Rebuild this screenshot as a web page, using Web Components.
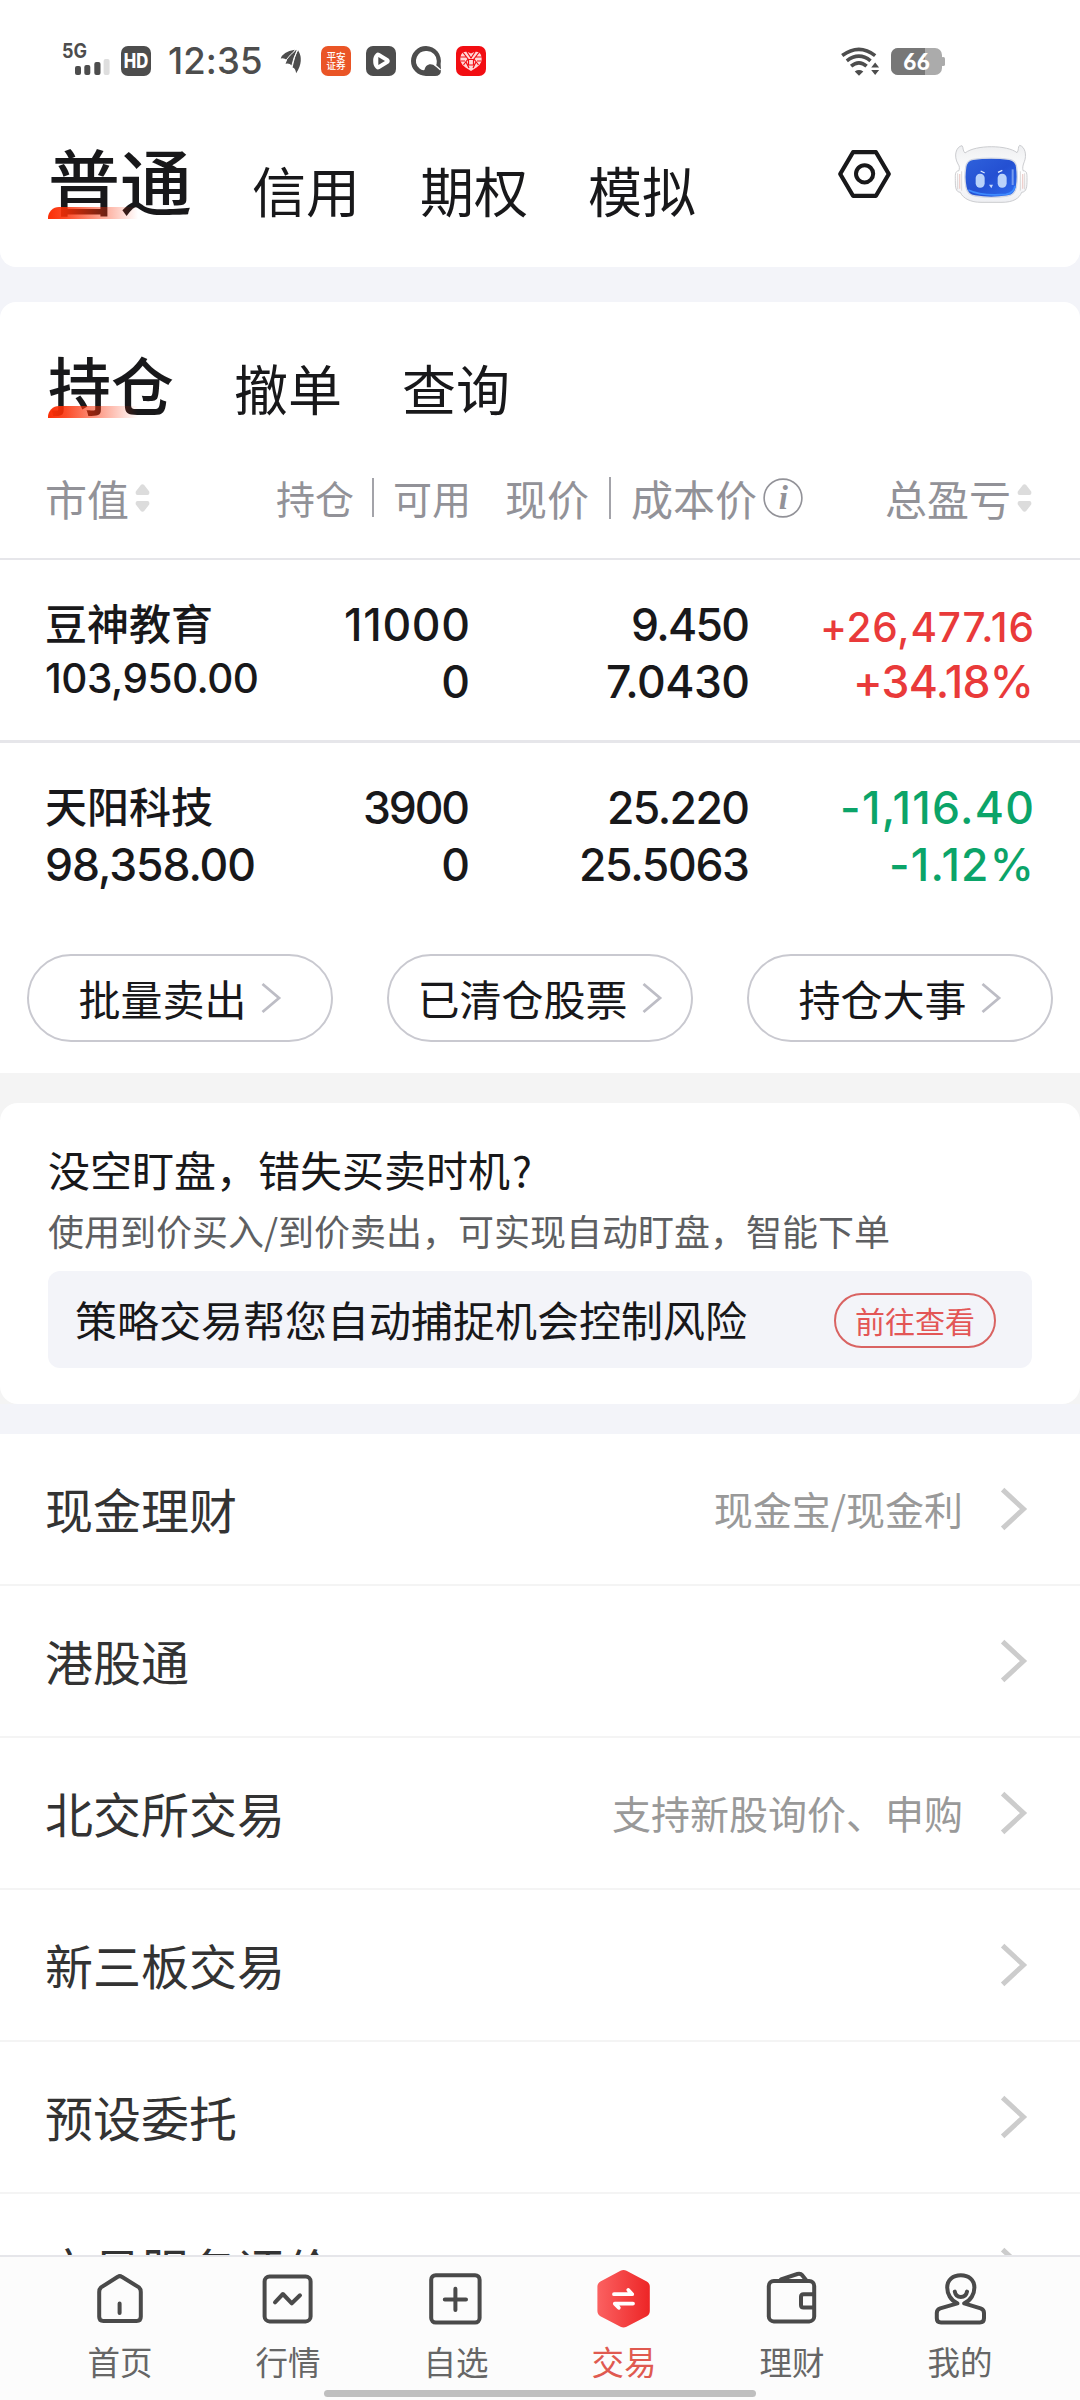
<!DOCTYPE html>
<html lang="zh-CN">
<head>
<meta charset="utf-8">
<title>交易</title>
<style>
html,body{margin:0;padding:0;background:#fff}
body{width:1080px;height:2400px;overflow:hidden;font-family:"Noto Sans CJK SC",sans-serif;color:#18181a}
</style>
</head>
<body>
<trade-app></trade-app>
<script>
const define = (name, html, setup) => {
  const tpl = document.createElement('template');
  tpl.innerHTML = html;
  customElements.define(name, class extends HTMLElement {
    constructor() {
      super();
      this.attachShadow({mode: 'open'}).appendChild(tpl.content.cloneNode(true));
    }
    connectedCallback() { if (setup) setup(this, this.shadowRoot); }
  });
};

const S = 'fill="none" stroke="#4a4a4a" stroke-width="4" stroke-linecap="round" stroke-linejoin="round"';
const ICONS = {
  settings: ['836 147 57 54', `<g fill="none" stroke="#18181a" stroke-linejoin="round"><path d="M853 152.2H876L888.8 174L876 195.8H853L840.2 174Z" stroke-width="4.2"/><circle cx="864.6" cy="173.8" r="8.6" stroke-width="4"/></g>`],
  robot: ['399 342 222 180', `<defs><linearGradient id="f" x1="0" y1="0" x2="1" y2="1"><stop offset="0" stop-color="#2f62dc"/><stop offset=".5" stop-color="#2450d2"/><stop offset="1" stop-color="#2d6cf0"/></linearGradient><linearGradient id="b" x1="0" y1="0" x2="0" y2="1"><stop offset="0" stop-color="#eeeff1"/><stop offset=".5" stop-color="#fff"/><stop offset="1" stop-color="#eeeff3"/></linearGradient></defs>
  <path d="M423 347C405 350 397 378 411 402C417 410 415 416 414 422C401 423 403 436 403 452C403 472 404 486 418 487C426 506 450 517 480 517H543C575 517 595 506 602 487C617 486 618 470 618 450C618 430 618 423 606 422C604 412 606 405 610 395C618 375 612 350 596 346C590 350 594 362 588 368C560 345 465 343 432 369C424 362 428 352 423 347Z" fill="url(#b)" stroke="#c4c5c8" stroke-width="2.6"/>
  <path d="M410 430V478M422 424V482M598 424V482M611 430V478" stroke="#d2cfd0" stroke-width="2.5" fill="none"/><path d="M416 432V476M605 432V476" stroke="#efd0cc" stroke-width="4"/>
  <path d="M456 388Q510 381 565 388Q585 392 587 412Q591 445 586 472Q582 494 560 498Q510 506 462 498Q439 494 435 472Q429 445 434 412Q437 391 456 388Z" fill="url(#f)" stroke="#d3d8e4" stroke-width="4"/>
  <path d="M442 480Q480 499 555 493Q578 490 582 468" fill="none" stroke="#3f8bff" stroke-width="5"/>
  <rect x="464" y="431" width="27" height="42" rx="13" fill="#b9d2fa"/><rect x="530" y="431" width="27" height="42" rx="13" fill="#b9d2fa"/><path d="M479 423L491 429M531 427L544 421" stroke="#dfeaff" stroke-width="4"/><path d="M504 464H516L511 475Z" fill="#c8d9fb"/><path d="M575 418V465" stroke="#779cef" stroke-width="6"/>`],
  chev: ['0 0 20 30', `<path d="M1.5 1L18 15L1.5 29" fill="none" stroke="#bdbdc5" stroke-width="2.8"/>`],
  more: ['0 0 28 44', `<path d="M2.6 2.6L23.5 22L2.6 41.4" fill="none" stroke="#ccc" stroke-width="5"/>`],
  sort: ['0 0 15 28', `<path d="M5.6 1.2Q7.5-.6 9.4 1.2L14.2 7.6Q15 11 12.4 11H2.6Q0 11 .8 7.6ZM5.6 26.8Q7.5 28.6 9.4 26.8L14.2 20.4Q15 17 12.4 17H2.6Q0 17 .8 20.4Z" fill="#dcdcdc"/>`],
  info: ['0 0 40 40', `<circle cx="20" cy="20" r="18.9" fill="none" stroke="#929298" stroke-width="1.6"/><text x="20.3" y="31" text-anchor="middle" font-family="Liberation Serif,serif" font-style="italic" font-weight="700" font-size="33" fill="#929298">i</text>`],
  home: ['90 2268 60 60', `<path ${S} d="M117.8 2276.8L101 2287.4Q99.2 2289 99.2 2292V2316.8Q99.2 2321 103.4 2321H136.6Q140.8 2321 140.8 2316.8V2292Q140.8 2289 139 2287.4L121.8 2276.8Q119.8 2275.4 117.8 2276.8ZM119.6 2303.6V2313"/>`],
  quote: ['258 2268 60 60', `<g ${S}><rect x="264.6" y="2276.4" width="46" height="45" rx="5"/><path d="M275 2302.3L282.9 2294L291.8 2303.3L300 2295.3"/></g>`],
  fav: ['426 2268 60 60', `<g ${S}><rect x="431.2" y="2275.2" width="48.4" height="47.4" rx="4.5"/><path d="M444.8 2299.4H466M455.4 2288.8V2310"/></g>`],
  trade: ['594 2268 60 60', `<defs><linearGradient id="t"><stop offset="0" stop-color="#fb6161"/><stop offset="1" stop-color="#ed2526"/></linearGradient></defs><path d="M620.5 2270.8Q623.5 2269.2 626.5 2270.8L646.8 2281.4Q649.8 2283.2 649.8 2286.5V2311Q649.8 2314.4 646.8 2316.2L626.5 2326.8Q623.5 2328.4 620.5 2326.8L600.4 2316.2Q597.4 2314.4 597.4 2311V2286.5Q597.4 2283.2 600.4 2281.4Z" fill="url(#t)"/><path d="M614 2294.2H632.2L628.3 2290M633 2303.6H614.8L618.8 2307.8" fill="none" stroke="#fff" stroke-width="3.8" stroke-linecap="round" stroke-linejoin="round"/>`],
  wallet: ['762 2268 60 60', `<g ${S}><rect x="768.8" y="2281" width="45.4" height="40.4" rx="5"/><path d="M781 2279.4L797.4 2274Q800.4 2273 802.4 2275.4L806 2280M813.6 2294.2H803.6Q801 2294.2 801 2296.8V2305Q801 2307.6 803.6 2307.6H813.6"/></g>`],
  me: ['930 2268 60 60', `<g ${S}><path d="M957.4 2303.4C950.6 2300.4 947.2 2293.6 947.2 2287.6C947.2 2279.6 953 2275.2 960.8 2275.2C968.6 2275.2 974.4 2279.6 974.4 2287.6C974.4 2293.6 971 2300.4 964.2 2303.4L980.6 2308.4Q984 2309.6 984 2313V2318.2Q984 2322.4 979.8 2322.4H941Q936.8 2322.4 936.8 2318.2V2313Q936.8 2309.6 940.2 2308.4ZM954.8 2291.6Q955.8 2297 960.8 2297Q966 2297 967 2291.6"/></g>`],
  signal: ['62 42 50 36', `<text x="62" y="58" font-family="Inter" font-weight="700" font-size="19.5" textLength="25" lengthAdjust="spacingAndGlyphs" fill="#4d4d4d">5G</text><g fill="#4d4d4d"><rect x="75" y="66" width="6" height="9" rx="2"/><rect x="84.3" y="65" width="6" height="10" rx="2"/><rect x="94.3" y="62" width="6.2" height="13" rx="2"/><rect x="103.6" y="59" width="6" height="16" rx="2" fill="#dedede"/></g>`],
  hd: ['121 46 30 30', `<rect x="121" y="46" width="30" height="30" rx="7" fill="#4d4d4d"/><text x="136" y="68" text-anchor="middle" font-family="Inter" font-weight="800" font-size="19.5" textLength="24.5" lengthAdjust="spacingAndGlyphs" fill="#fff">HD</text>`],
  feather: ['720 54 68 78', `<path d="M722 84Q728 62 766 56Q752 70 742 88Q730 80 722 84ZM737 100Q748 66 772 56Q764 76 757 106Q748 96 737 100ZM759 112Q766 76 776 58Q796 90 770 130Q768 114 759 112Z" fill="#4d4d4d"/><path d="M736 92Q752 70 766 60M756 108Q762 80 774 58" stroke="#fff" stroke-width="3" fill="none"/>`],
  pingan: ['0 0 30 30', `<rect width="30" height="30" rx="7" fill="#ea5526"/><g font-family="Noto Sans CJK SC" font-weight="500" font-size="9.6" fill="#fff" text-anchor="middle"><text x="15" y="13.8">平安</text><text x="15" y="23.4">证券</text></g>`],
  play: ['0 0 30 30', `<rect width="30" height="30" rx="7" fill="#4d4d4d"/><path d="M10 7.5Q11.5 6 13.5 7L22.5 12.4Q25 15 22.5 17.6L13.5 23Q11.5 24 10 22.5Q7 20 7.2 15Q7 10 10 7.5Z" fill="#fff"/><path d="M12.3 11L19 15L12.3 19Z" fill="#4d4d4d"/>`],
  q: ['0 0 30 30', `<path d="M15 0A15 15 0 0 1 29.6 18L30 24Q30 30 24 30H15A15 15 0 0 1 15 0Z" fill="#4d4d4d"/><path d="M16 5A10 10 0 0 0 8.6 22.6Q11 24.6 13.4 24Q14.5 19 18.6 18.2Q22 17.8 24.6 20.6Q26 18 25.8 15A10 10 0 0 0 16 5Z" fill="#fff"/><path d="M24 19L29.6 24" stroke="#fff" stroke-width="1.4"/>`],
  heart: ['0 0 30 30', `<rect width="30" height="30" rx="7" fill="#f20d12"/><path d="M15 7.5Q8 3.5 5 9Q2.5 17 9.5 21.5L15 25L20.5 21.5Q27.5 17 25 9Q22 3.5 15 7.5Z" fill="#ffd9d9"/><path d="M7 6.5L12 13L7.5 19M23 6.5L18 13L22.5 19M4.5 11H10M25.5 11H20M11 6L15 12L19 6M10 16L13 22M20 16L17 22M12.5 13.5H17.5V19H12.5ZM5 15H9M25 15H21" fill="none" stroke="#f20d12" stroke-width="1.2"/>`],
  wifi: ['61 50 120 88', `<g fill="none" stroke="#4d4d4d"><path d="M67 76Q118 38 167 76" stroke-width="11"/><path d="M81 92Q118 64 153 92" stroke-width="11"/><path d="M94 108Q118 88 141 108" stroke-width="11"/></g><path d="M105 124Q118 115 131 124L118 137Z" fill="#4d4d4d"/><path d="M151 94H184V138H151Z" fill="#fff"/><path d="M155 112L167 97L179 112ZM155 120H179L167 135Z" fill="#4d4d4d"/>`],
  battery: ['0 0 54 27', `<clipPath id="c"><rect width="51" height="27" rx="7"/></clipPath><g clip-path="url(#c)"><rect width="51" height="27" fill="#ababab"/><rect width="34" height="27" fill="#777"/></g><rect x="50" y="9" width="4" height="9" rx="1.6" fill="#ababab"/><text x="25.6" y="22" text-anchor="middle" font-family="Lato" font-weight="900" font-size="22.5" textLength="26.5" fill="#fff">66</text>`]
};

define('ui-icon', `<style>:host{display:block;flex:none}svg{display:block;width:100%;height:100%;overflow:visible}</style>`, (el, root) => {
  const [box, body] = ICONS[el.getAttribute('name')];
  root.innerHTML += `<svg viewBox="${box}">${body}</svg>`;
});

/* Figures tracked out to a given column width. */
define('fit-num', `<style>:host{display:block;white-space:nowrap;font-family:Inter,sans-serif;font-weight:500}span{display:inline-block}</style><span><slot></slot></span>`, (el, root) => {
  const s = root.querySelector('span');
  el.style.fontSize = (el.getAttribute('size') || 44.5) + 'px';
  queueMicrotask(() => {
    const n = el.textContent.length, w = +el.getAttribute('w');
    if (!w || n < 2) return;
    const ls = (w - s.getBoundingClientRect().width) / (n - 1);
    s.style.letterSpacing = ls + 'px';
    s.style.marginRight = -ls + 'px';
  });
});

define('status-bar', `<style>
:host{display:flex;align-items:center;height:30px;padding:46px 135px 0 62px}
.time{width:94px;margin-left:17px;line-height:30px;color:#4d4d4d}
ui-icon{width:30px;height:30px}
.spacer{flex:1}
</style>
<ui-icon name="signal" style="width:50px;height:36px;margin-top:-2px"></ui-icon>
<ui-icon name="hd" style="margin-left:9px"></ui-icon>
<fit-num class="time" size="36.5" w="94.5" style="font-weight:450">12:35</fit-num>
<ui-icon name="feather" style="width:22px;height:25px;margin-left:18px"></ui-icon>
<ui-icon name="pingan" style="margin-left:19px"></ui-icon>
<ui-icon name="play" style="margin-left:15px"></ui-icon>
<ui-icon name="q" style="margin-left:15px"></ui-icon>
<ui-icon name="heart" style="margin-left:15px"></ui-icon>
<div class="spacer"></div>
<ui-icon name="wifi" style="width:40px;height:29px"></ui-icon>
<ui-icon name="battery" style="width:54px;height:27px;margin-left:11px"></ui-icon>`);

define('tab-item', `<style>
:host{display:block;position:relative;font-size:54px;line-height:54px;white-space:nowrap}
:host([active]){font-weight:500}
i{display:none}
:host([active]) i{display:block;position:absolute;left:0;bottom:-4px;width:90px;height:12px;border-top-left-radius:11px;background:linear-gradient(90deg,#fb2e05 0,rgba(251,46,5,.86) 20%,rgba(251,46,5,0))}
</style><slot></slot><i></i>`);

define('top-tabs', `<style>
:host{display:flex;box-sizing:border-box;height:191px;padding:67px 52px 0 48px;gap:60px;align-items:flex-start}
.big{font-size:72px;line-height:72px}
.side{display:flex;gap:61px;margin-left:auto}
</style>
<tab-item class="big" active>普通</tab-item>
<tab-item style="margin-top:20px">信用</tab-item>
<tab-item style="margin-top:20px">期权</tab-item>
<tab-item style="margin-top:20px">模拟</tab-item>
<div class="side"><ui-icon name="settings" style="width:57px;height:54px;margin-top:4px"></ui-icon><ui-icon name="robot" style="width:74px;height:60px;margin-top:1px"></ui-icon></div>`);

define('hold-row', `<style>
:host{display:grid;grid-template-columns:217px 208px 280px 284px;padding-left:45px;height:var(--h,180px);align-items:start}
div{display:flex;flex-direction:column;line-height:57px}
.r{align-items:flex-end;padding-top:var(--top,36.5px)}
.l{padding-top:var(--ltop,33px);line-height:var(--llh,57px)}
.pl{padding-top:var(--ptop,36.5px);line-height:var(--plh,57px);color:var(--pl)}
</style>
<div class="l"><slot name="name"></slot></div><div class="r"><slot name="qty"></slot></div><div class="r"><slot name="price"></slot></div><div class="r pl"><slot name="pl"></slot></div>`);

define('pill-button', `<style>
:host{display:flex;align-items:center;justify-content:center;box-sizing:border-box;width:306px;height:88px;border:2px solid #c9c9d0;border-radius:44px;font-size:42px;line-height:84px;gap:15px}
ui-icon{width:20px;height:30px;margin:-1px 1px 0 -1px}
</style><span><slot></slot></span><ui-icon name="chev"></ui-icon>`);

define('holdings-card', `<style>
:host{display:block;box-sizing:border-box;height:771px;background:#fff;border-radius:16px 16px 0 0}
.tabs{display:flex;gap:60px;padding:49px 0 0 48px;height:63px;align-items:flex-start}
.act{font-size:63px;line-height:63px}
.head{display:flex;align-items:center;height:63px;margin-top:52px;padding:0 48px 29px 45px;color:#929298;font-size:42px;line-height:63px;white-space:nowrap}
.s39{font-size:39px}
.sep{width:2px;background:#a3a3a9;margin:0 20px 0 19px}
hr{border:0;margin:0;background:#e6e6ea}
.btns{display:flex;gap:54px;padding:0 27px}
.nm{font-size:42px;font-weight:500}
</style>
<div class="tabs"><tab-item class="act" active>持仓</tab-item><tab-item style="margin-top:10px">撤单</tab-item><tab-item style="margin-top:10px">查询</tab-item></div>
<div class="head">
<span>市值</span><ui-icon name="sort" style="width:15px;height:28px;margin-left:6px"></ui-icon>
<span class="s39" style="margin-left:126px">持仓</span><b class="sep" style="height:39px;margin-left:18px;margin-right:19px"></b><span class="s39">可用</span>
<span style="margin-left:34px">现价</span><b class="sep" style="height:42px;margin-left:20px"></b><span>成本价</span>
<ui-icon name="info" style="width:40px;height:40px;margin-left:6px"></ui-icon>
<span style="margin-left:auto">总盈亏</span><ui-icon name="sort" style="width:15px;height:28px;margin-left:6px"></ui-icon>
</div>
<hr style="height:2px">
<hold-row style="--pl:#e93a3a;--ptop:39.5px;--plh:55px">
<span slot="name" class="nm">豆神教育</span><fit-num slot="name" size="40.5" w="214">103,950.00</fit-num>
<fit-num slot="qty" w="126">11000</fit-num><fit-num slot="qty">0</fit-num>
<fit-num slot="price" w="119">9.450</fit-num><fit-num slot="price" w="144">7.0430</fit-num>
<fit-num slot="pl" size="40.5" w="214">+26,477.16</fit-num><fit-num slot="pl" w="181">+34.18%</fit-num>
</hold-row>
<hr style="height:3px">
<hold-row style="--pl:#0ba469;--h:211px;--ltop:32px;--llh:60px">
<span slot="name" class="nm">天阳科技</span><fit-num slot="name" w="211">98,358.00</fit-num>
<fit-num slot="qty" w="107">3900</fit-num><fit-num slot="qty">0</fit-num>
<fit-num slot="price" w="143">25.220</fit-num><fit-num slot="price" w="171">25.5063</fit-num>
<fit-num slot="pl" w="194">-1,116.40</fit-num><fit-num slot="pl" w="145">-1.12%</fit-num>
</hold-row>
<div class="btns"><pill-button>批量卖出</pill-button><pill-button>已清仓股票</pill-button><pill-button>持仓大事</pill-button></div>`);

define('promo-card', `<style>
:host{display:block;background:#f4f4f4;padding-top:30px}
.card{box-sizing:border-box;height:301px;background:#fff;border-radius:18px;padding:37px 48px 0;overflow:hidden}
.t{font-size:42px;line-height:58px;height:62px;white-space:nowrap}
.t span{margin-left:2px}
.s{font-size:36px;line-height:56px;height:69px;color:#5e5f62;white-space:nowrap}
.box{display:flex;align-items:center;justify-content:space-between;height:97px;box-sizing:border-box;padding:0 36px 0 27px;background:#f3f4f9;border-radius:12px;font-size:42px}
.box span{line-height:97px;margin-top:-2px}
.go{box-sizing:border-box;width:162px;height:55px;margin-top:1px;border:2px solid #d96362;border-radius:28px;color:#e35656;font-size:30px;line-height:50px;text-align:center}
</style>
<div class="card"><div class="t">没空盯盘，错失买卖时机<span>?</span></div><div class="s">使用到价买入/到价卖出，可实现自动盯盘，智能下单</div>
<div class="box"><span>策略交易帮您自动捕捉机会控制风险</span><div class="go">前往查看</div></div></div>`);

define('menu-row', `<style>
:host{display:flex;align-items:center;box-sizing:border-box;height:152px;border-bottom:2px solid #f4f4f4;padding:0 52px 2px 45px;font-size:48px;line-height:72px;color:#333;background:#fff;white-space:nowrap}
em{margin-left:auto;font-style:normal;font-size:39px;color:#999;margin-right:37px}
ui-icon{width:28px;height:44px;margin-top:2px}
</style><slot></slot><em></em><ui-icon name="more"></ui-icon>`, (el, root) => { root.querySelector('em').textContent = el.getAttribute('note') || ''; });

define('nav-item', `<style>
:host{display:flex;flex-direction:column;align-items:center;width:168px;padding-top:11px;font-size:32.5px;line-height:48px;color:#666}
:host([active]){color:#e05a50}
ui-icon,::slotted(ui-icon){width:60px;height:60px;margin-bottom:9px}
</style><slot name="icon"></slot><span><slot></slot></span>`);

define('bottom-nav', `<style>
:host{display:flex;flex-direction:column;align-items:center;box-sizing:border-box;height:145px;flex:none;border-top:2px solid #e6e6ea;background:#fcfcfc}
.items{display:flex;height:133px}
.bar{width:432px;height:7px;border-radius:4px;background:#bfbfbf}
</style>
<div class="items">
<nav-item><ui-icon slot="icon" name="home"></ui-icon>首页</nav-item>
<nav-item><ui-icon slot="icon" name="quote"></ui-icon>行情</nav-item>
<nav-item><ui-icon slot="icon" name="fav"></ui-icon>自选</nav-item>
<nav-item active><ui-icon slot="icon" name="trade"></ui-icon>交易</nav-item>
<nav-item><ui-icon slot="icon" name="wallet"></ui-icon>理财</nav-item>
<nav-item><ui-icon slot="icon" name="me"></ui-icon>我的</nav-item>
</div><div class="bar"></div>`);

define('trade-app', `<style>
:host{display:flex;flex-direction:column;width:1080px;height:2400px;overflow:hidden}
main{flex:1;min-height:0;overflow:hidden;background:#f3f4f9}
header{background:#fff;border-radius:0 0 16px 16px;height:267px;margin-bottom:35px}
.menu{margin-top:30px}
</style>
<main>
<header><status-bar></status-bar><top-tabs></top-tabs></header>
<holdings-card></holdings-card>
<promo-card></promo-card>
<div class="menu">
<menu-row note="现金宝/现金利">现金理财</menu-row>
<menu-row>港股通</menu-row>
<menu-row note="支持新股询价、申购">北交所交易</menu-row>
<menu-row>新三板交易</menu-row>
<menu-row>预设委托</menu-row>
<menu-row>交易服务评价</menu-row>
</div>
</main>
<bottom-nav></bottom-nav>`);
</script>
</body>
</html>
